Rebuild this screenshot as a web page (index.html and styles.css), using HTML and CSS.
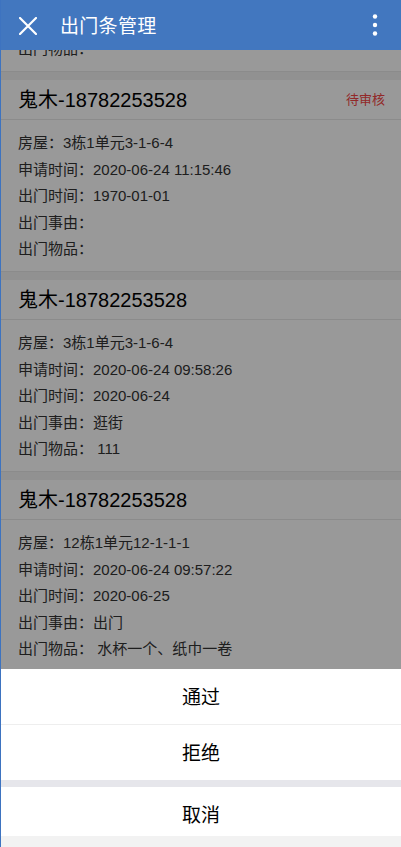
FILE: index.html
```html
<!DOCTYPE html>
<html lang="zh-CN">
<head>
    <meta charset="UTF-8">
    <meta name="viewport" content="width=device-width, initial-scale=1.0">
    <title>出门条管理</title>
    <link rel="stylesheet" href="styles.css">
</head>
<body>
    <div class="app">
        <header class="topbar">
            <svg class="close" width="18" height="18" viewBox="0 0 18 18">
                <path d="M1 1 L17 17 M17 1 L1 17" stroke="#fff" stroke-width="2.2" stroke-linecap="round"/>
            </svg>
            <h1 class="title">出门条管理</h1>
            <svg class="more" width="6" height="22" viewBox="0 0 6 22">
                <circle cx="3" cy="2.5" r="2.2" fill="#fff"/>
                <circle cx="3" cy="11" r="2.2" fill="#fff"/>
                <circle cx="3" cy="19.5" r="2.2" fill="#fff"/>
            </svg>
        </header>

        <main class="content">
            <div class="list">
                <div class="card">
                    <div class="card-head">
                        <span class="name">鬼木-18782253528</span>
                        <span class="status">待审核</span>
                    </div>
                    <div class="card-body">
                        <p class="row">房屋：3栋1单元3-1-6-4</p>
                        <p class="row">申请时间：2020-06-24 11:20:10</p>
                        <p class="row">出门时间：1970-01-01</p>
                        <p class="row">出门事由：</p>
                        <p class="row">出门物品：</p>
                    </div>
                </div>

                <div class="card">
                    <div class="card-head">
                        <span class="name">鬼木-18782253528</span>
                        <span class="status">待审核</span>
                    </div>
                    <div class="card-body">
                        <p class="row">房屋：3栋1单元3-1-6-4</p>
                        <p class="row">申请时间：2020-06-24 11:15:46</p>
                        <p class="row">出门时间：1970-01-01</p>
                        <p class="row">出门事由：</p>
                        <p class="row">出门物品：</p>
                    </div>
                </div>

                <div class="card">
                    <div class="card-head">
                        <span class="name">鬼木-18782253528</span>
                    </div>
                    <div class="card-body">
                        <p class="row">房屋：3栋1单元3-1-6-4</p>
                        <p class="row">申请时间：2020-06-24 09:58:26</p>
                        <p class="row">出门时间：2020-06-24</p>
                        <p class="row">出门事由：逛街</p>
                        <p class="row">出门物品： 111</p>
                    </div>
                </div>

                <div class="card">
                    <div class="card-head">
                        <span class="name">鬼木-18782253528</span>
                    </div>
                    <div class="card-body">
                        <p class="row">房屋：12栋1单元12-1-1-1</p>
                        <p class="row">申请时间：2020-06-24 09:57:22</p>
                        <p class="row">出门时间：2020-06-25</p>
                        <p class="row">出门事由：出门</p>
                        <p class="row">出门物品： 水杯一个、纸巾一卷</p>
                    </div>
                </div>
            </div>

            <div class="mask">
                <div class="sheet">
                    <div class="sheet-group">
                        <div class="sheet-btn">通过</div>
                        <div class="sheet-btn">拒绝</div>
                    </div>
                    <div class="sheet-btn cancel">取消</div>
                    <div class="safe"></div>
                </div>
            </div>
        </main>
    </div>
</body>
</html>
```

FILE: styles.css
```css
body{
    margin: 0;
    background-color: #3d73c0;
    font-family: "Liberation Sans", "Noto Sans CJK SC", sans-serif;
}

.app{
    width: 400px;
    height: 847px;
    margin-left: 1px;
    overflow: hidden;
    background-color: #f2f2f2;
}

.topbar{
    height: 50px;
    background-color: #4277bf;
    display: flex;
    align-items: center;
    padding: 0 23px 0 18px;
    box-sizing: border-box;
}

.close{
    display: block;
    margin-top: 1px;
}

.title{
    flex: 1;
    margin: 0 0 2px 23px;
    color: #fff;
    font-size: 19px;
    font-weight: normal;
    letter-spacing: 0.3px;
}

.more{
    display: block;
}

.content{
    position: relative;
    height: 797px;
    overflow: hidden;
}

.list{
    margin-top: -170px;
}

.card{
    background-color: #fff;
    border-bottom: 1px solid #e8e8e8;
    margin-bottom: 8px;
}

.card-head{
    height: 36px;
    border-bottom: 1px solid #e8e8e8;
    display: flex;
    align-items: center;
    justify-content: space-between;
    padding: 0 16px 3px 17px;
}

.name{
    font-size: 20px;
    color: #000;
}

.status{
    font-size: 13px;
    color: #f44545;
}

.card-body{
    padding: 10px 0 8.5px 17px;
}

.row{
    margin: 0;
    font-size: 15px;
    line-height: 26.5px;
    color: #333;
}

.mask{
    position: absolute;
    top: 0;
    left: 0;
    right: 0;
    bottom: 0;
    background-color: rgba(0, 0, 0, 0.4);
    display: flex;
    flex-direction: column;
    justify-content: flex-end;
}

.sheet{
    background-color: #e6e6eb;
}

.sheet-group{
    margin-bottom: 7px;
}

.sheet-btn{
    height: 55px;
    line-height: 57px;
    background-color: #fff;
    text-align: center;
    font-size: 19px;
    color: #000;
}

.sheet-group .sheet-btn + .sheet-btn{
    border-top: 1px solid #eee;
}

.cancel{
    height: 49px;
    line-height: 57px;
}

.safe{
    height: 11px;
    background-color: #f2f2f2;
}
```
